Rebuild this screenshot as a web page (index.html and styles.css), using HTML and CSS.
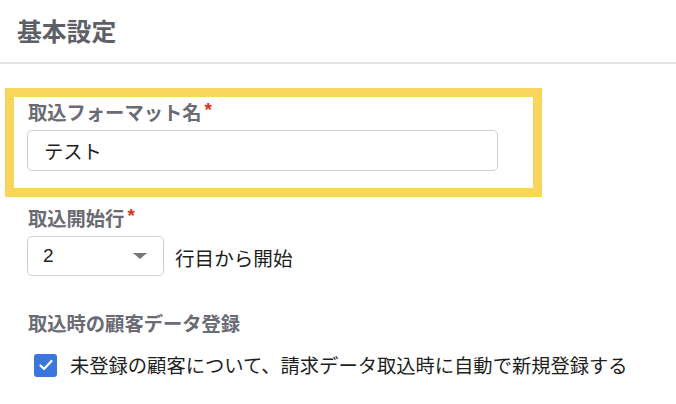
FILE: index.html
```html
<!DOCTYPE html>
<html lang="ja">
<head>
<meta charset="utf-8">
<link rel="stylesheet" href="styles.css">
</head>
<body>
<div class="page">
  <header class="head"><h1 class="title">基本設定</h1></header>
  <div class="highlight">
    <div class="field">
      <label class="label">取込フォーマット名<span class="req">*</span></label>
      <div class="input">テスト</div>
    </div>
  </div>
  <div class="body">
    <div class="field">
      <label class="label">取込開始行<span class="req">*</span></label>
      <div class="row">
        <div class="select"><span>2</span><svg class="caret" width="14" height="6" viewBox="0 0 14 6"><path d="M0 0h14L7 6z" fill="#777"/></svg></div>
        <span class="suffix">行目から開始</span>
      </div>
    </div>
    <div class="field field-last">
      <label class="label">取込時の顧客データ登録</label>
      <div class="check-row">
        <span class="checkbox"><svg width="16" height="16" viewBox="0 0 16 16"><path d="M2.5 8.5l3.5 3.5 7.5-8" fill="none" stroke="#fff" stroke-width="2.2" stroke-linecap="round" stroke-linejoin="round"/></svg></span>
        <span class="check-text">未登録の顧客について、請求データ取込時に自動で新規登録する</span>
      </div>
    </div>
  </div>
</div>
</body>
</html>
```

FILE: styles.css
```css
html, body {
  margin: 0;
  padding: 0;
  background: #fff;
}
body {
  font-family: "Noto Sans CJK JP", "Noto Sans", sans-serif;
  color: #222;
  width: 676px;
  height: 404px;
  overflow: hidden;
}
.head {
  height: 62px;
  border-bottom: 2px solid #e2e2e2;
  display: flex;
  align-items: center;
  padding-left: 17px;
}
.title {
  margin: 0;
  font-size: 24.8px;
  font-weight: 700;
  color: #5e6068;
  line-height: 30px;
  padding-bottom: 3px;
}
.highlight {
  margin: 24px 0 0 5px;
  width: 506px;
  height: 91px;
  border: 9px solid #f8d55b;
  padding: 0 0 0 13px;
  box-sizing: content-box;
}
.field {
  display: flex;
  flex-direction: column;
}
.label {
  font-size: 19.3px;
  font-weight: 700;
  color: #6a6b73;
  line-height: 26px;
  display: flex;
  align-items: flex-start;
}
.highlight .label {
  margin-top: 2px;
  margin-left: 1px;
}
.req {
  color: #d4371c;
  font-family: "Liberation Sans", sans-serif;
  font-weight: 700;
  font-size: 19px;
  line-height: 19px;
  margin-left: 3px;
  margin-top: 1px;
}
.input {
  margin-top: 5px;
  width: 453px;
  height: 39px;
  border: 1px solid #cfcfcf;
  border-radius: 5px;
  display: flex;
  align-items: center;
  padding-left: 16px;
  font-size: 19.3px;
  color: #1e1e1e;
  box-sizing: content-box;
}
.body {
  padding-left: 27px;
  margin-top: 8px;
}
.body .label {
  margin-left: 1px;
}
.row {
  display: flex;
  align-items: center;
  margin-top: 5px;
}
.select {
  width: 137px;
  height: 40px;
  border: 1px solid #cfcfcf;
  border-radius: 5px;
  display: flex;
  align-items: center;
  justify-content: space-between;
  padding: 0 16px 0 15px;
  box-sizing: border-box;
  font-family: "Liberation Sans", "Noto Sans CJK JP", sans-serif;
  font-size: 19px;
  color: #1e1e1e;
}
.suffix {
  margin-left: 11px;
  font-size: 19.6px;
  color: #1e1e1e;
  padding-top: 2px;
}
.field-last {
  margin-top: 34px;
}
.check-row {
  display: flex;
  align-items: center;
  margin-top: 15px;
  margin-left: 7px;
}
.checkbox {
  width: 23px;
  height: 23px;
  border-radius: 3px;
  background: #3a76de;
  display: flex;
  align-items: center;
  justify-content: center;
  flex: none;
}
.check-text {
  margin-left: 13px;
  font-size: 19.3px;
  color: #1e1e1e;
  white-space: nowrap;
}
```
